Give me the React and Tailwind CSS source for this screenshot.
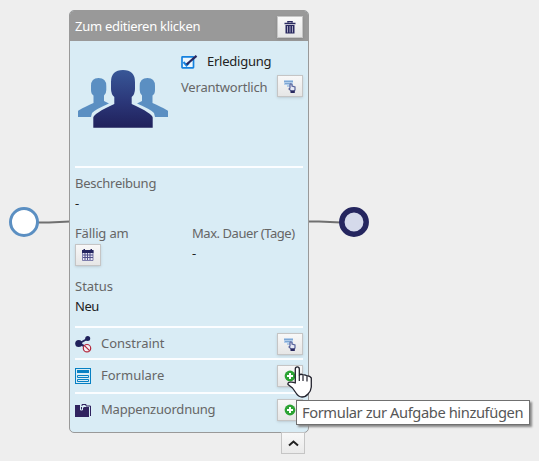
import React from "react";

function IconButton({ children, className = "" }) {
  return (
    <button className={`flex h-[22px] w-[26px] shrink-0 items-center justify-center border border-[#c5c5c5] bg-gradient-to-b from-[#f8f8f8] to-[#e6e6e6] shadow-sm ${className}`}>
      {children}
    </button>
  );
}

function Team() {
  return (
    <svg className="mt-[29px] ml-[3px] block" width="90" height="58" viewBox="0 0 90 58">
      <defs>
        <linearGradient id="team" x1="0" y1="0" x2="0" y2="1">
          <stop offset="0" stopColor="#385797" />
          <stop offset="0.55" stopColor="#2b3779" />
          <stop offset="1" stopColor="#20215b" />
        </linearGradient>
      </defs>
      <g fill="#5b8fc2">
        <path d="M0 47V41Q1 39.500 15.500 33V25.500Q13 24 13 20V16Q13 8 20.500 8Q28.300 8 28.300 16V20Q28.300 24 26 25.500V31L31 33.500Q17 39.500 14 43L13 47Z" />
        <path d="M90 47V41Q89 39.500 74.500 33V25.500Q77 24 77 20V16Q77 8 69.500 8Q61.700 8 61.700 16V20Q61.700 24 64 25.500V31L59 33.500Q73 39.500 76 43L77 47Z" />
      </g>
      <path fill="url(#team)" d="M15.300 57.700V47.500Q15.500 43.500 36.300 34V27Q33 24 33 19V12Q33 0 45 0Q57 0 57 12V19Q57 24 53.700 27V34Q74.500 43.500 74.700 47.500V57.700Z" />
    </svg>
  );
}

function Trash() {
  return (
    <svg width="12" height="13" viewBox="0 0 12 13">
      <path d="M4 1.500V.5H8V1.500M.5 2.500H11.500" fill="none" stroke="#29285f" strokeWidth="1.600" />
      <path d="M1.500 4H10.500V12.500H1.500Z" fill="#29285f" />
      <path d="M3.500 5V11.500M6 5V11.500M8.500 5V11.500" stroke="#aaaac3" strokeWidth="1" />
    </svg>
  );
}

function Assign() {
  return (
    <svg width="12" height="13" viewBox="0 0 12 13">
      <path d="M0 0H9V7H3V5H0Z" fill="#b3cdea" />
      <path d="M0 1.500H9M1 3.500H7" stroke="#7da7d4" strokeWidth="1.200" />
      <path d="M6 8V4.500Q7 3.200 8 4.500V6L11 7V10L10 11H7L5 9Z" fill="#e6e9f5" stroke="#59639a" strokeWidth="1.200" />
      <path d="M6.500 10.500H10.800V13H6.500Z" fill="#29285f" />
    </svg>
  );
}

function Calendar() {
  return (
    <svg width="12" height="12" viewBox="0 0 12 12">
      <path d="M.5 1.500H11V11.500H.5Z" fill="#e7e7f3" stroke="#62629a" strokeWidth=".8" />
      <path d="M0 1H1.500V0H3V1H8.500V0H10V1H11.500V4H0Z" fill="#25265f" />
      <path d="M3 4V11M5.500 4V11M8 4V11M1 6H11M1 8.500H11" stroke="#51518b" />
    </svg>
  );
}

function Check() {
  return (
    <svg width="17" height="14" viewBox="0 0 17 14">
      <rect x="1" y="1.800" width="11.500" height="11" rx=".5" fill="#eef7fd" stroke="#1682df" strokeWidth="1.700" />
      <path d="M2.500 7L5.500 10.500L8 8" fill="none" stroke="#1682df" strokeWidth="2" />
      <path d="M5.500 9.500L15.500 .8" stroke="#29285f" strokeWidth="2.200" />
    </svg>
  );
}

function Constraint() {
  return (
    <svg className="mt-[3px]" width="17" height="17" viewBox="0 0 17 17">
      <path d="M4 7.500L13 2.500M4 7.500L11 11" stroke="#25265f" strokeWidth="2" />
      <circle cx="3.700" cy="7.500" r="3.500" fill="#20215b" />
      <circle cx="12.700" cy="2.600" r="2.500" fill="#20215b" />
      <circle cx="12" cy="12.200" r="3.700" fill="#f4f0f4" stroke="#b3263b" strokeWidth="1.200" />
      <path d="M9.500 9.700L14.500 14.700" stroke="#b3263b" strokeWidth="1.200" />
    </svg>
  );
}

function FormIcon() {
  return (
    <svg className="mt-[2px]" width="16" height="16" viewBox="0 0 16 16">
      <rect x=".5" y=".5" width="15" height="15" fill="#d9ecf5" stroke="#0780c3" />
      <path d="M2 2H14V5H2Z" fill="#0780c3" />
      <path d="M2.500 7.500H13.500V9.500H2.500ZM2.500 11.500H13.500V13.500H2.500Z" fill="none" stroke="#0780c3" />
    </svg>
  );
}

function Folder() {
  return (
    <svg className="mt-[3px]" width="16" height="13" viewBox="0 0 16 13">
      <path d="M0 3V1H5V3H14V13H0Z" fill="#30235f" />
      <path d="M7 2V.5H11V2H15.500V12" fill="none" stroke="#30235f" />
      <path d="M5.500 3V6H7.500V3H9" fill="none" stroke="#d9ecf5" />
    </svg>
  );
}

function Add() {
  return (
    <svg width="12" height="12" viewBox="0 0 12 12">
      <circle cx="6" cy="6" r="5.400" fill="#2ba333" />
      <path d="M3 6H9M6 3V9" stroke="white" strokeWidth="2" />
    </svg>
  );
}

function FieldRow({ icon, label, className, labelClass = "", children }) {
  return (
    <div className={`flex border-t-2 border-[#fbfdff] ${className}`}>
      <div className="flex h-[30px] w-[26px] items-center">{icon}</div>
      <div className={`h-[30px] flex-1 leading-[30px] ${labelClass}`}>{label}</div>
      <div className="pt-[5px]">{children}</div>
    </div>
  );
}

function TaskCard() {
  return (
    <section className="absolute top-[10px] left-[69px] h-[423px] w-[240px] overflow-hidden rounded-[5px] border border-[#999] bg-[#d9ecf5] text-[13px] text-[#666]">
      <header className="flex h-[30px] items-center justify-between bg-[#999] pr-[5px] pl-[5px] text-white">
        <span className="mt-[2px] tracking-[-0.28px]">Zum editieren klicken</span>
        <IconButton className="mt-[2px]"><Trash /></IconButton>
      </header>
      <div className="pr-[5px] pl-[5px]">
        <div className="flex h-[125px]">
          <div className="w-[106px]"><Team /></div>
          <div className="flex-1 pt-[11px]">
            <div className="flex h-[20px] items-center">
              <Check />
              <span className="ml-[9px] tracking-[-0.25px] text-[#222]">Erledigung</span>
            </div>
            <div className="mt-[3px] flex h-[22px] items-center justify-between">
              <span className="mt-[3px] tracking-[-0.2px]">Verantwortlich</span>
              <IconButton><Assign /></IconButton>
            </div>
          </div>
        </div>
        <div className="h-[160px] border-t-2 border-[#fbfdff] pt-[5px] leading-5">
          <div className="tracking-[-0.25px]">Beschreibung</div>
          <div className="text-[#222]">-</div>
          <div className="mt-[10px] flex">
            <div className="w-[117px]">
              <div className="tracking-[-0.15px]">Fällig am</div>
              <IconButton className="mt-px"><Calendar /></IconButton>
            </div>
            <div>
              <div className="tracking-[-0.45px] whitespace-nowrap">Max. Dauer (Tage)</div>
              <div className="text-[#222]">-</div>
            </div>
          </div>
          <div className="mt-[10px]">Status</div>
          <div className="tracking-[-0.5px] text-[#222]">Neu</div>
        </div>
        <FieldRow className="h-[32px]" icon={<Constraint />} label="Constraint"><IconButton><Assign /></IconButton></FieldRow>
        <FieldRow className="h-[34px]" icon={<FormIcon />} label="Formulare"><IconButton><Add /></IconButton></FieldRow>
        <FieldRow className="h-[39px]" labelClass="tracking-[-0.22px]" icon={<Folder />} label="Mappenzuordnung"><IconButton><Add /></IconButton></FieldRow>
      </div>
    </section>
  );
}

export default function App() {
  return (
    <main className="relative h-[461px] w-[539px] overflow-hidden bg-[#eee] font-['Noto_Sans',sans-serif]">
      <svg className="absolute top-[205px] left-0" width="380" height="34">
        <path d="M38 17.500H49L70 16.500M308 16.500H319L341 17.500" fill="none" stroke="#707070" strokeWidth="2" />
        <circle cx="24" cy="17" r="13.500" fill="white" stroke="#5b8fc2" strokeWidth="3" />
        <circle cx="354" cy="17" r="12.200" fill="#d5daeb" stroke="#25265f" strokeWidth="5.500" />
      </svg>
      <TaskCard />
      <button className="absolute top-[432px] left-[281px] flex h-[22px] w-[24px] items-center justify-center border border-[#c5c5c5] bg-gradient-to-b from-[#f8f8f8] to-[#eaeaea]">
        <svg width="11" height="7" viewBox="0 0 11 7"><path d="M1 5.500L5.500 1.500L10 5.500" fill="none" stroke="#222" strokeWidth="2" /></svg>
      </button>
      <div className="absolute top-[400px] left-[296px] h-[25px] w-[234px] border border-[#707070] bg-white pl-[5px] text-[14.7px] leading-[23px] tracking-[-0.4px] whitespace-nowrap text-[#575757] shadow-[2px_2px_2px_#888]">
        Formular zur Aufgabe hinzufügen
      </div>
      <svg className="absolute top-[366px] left-[287px]" width="26" height="32" viewBox="0 0 26 32">
        <path d="M8.300 17V3Q8.300 .8 10.300 .8Q12.300 .8 12.300 3V9Q14 7.500 16 9Q18 8.300 20 10Q22.500 9.500 24.300 12V21Q24 25 21 28Q18.500 31 15 31Q11.500 31 9 27L5.500 22L1 18.500Q.5 16.500 3 16.200Q5.500 15.800 8.300 17Z" fill="white" stroke="#22222d" strokeWidth="1.300" strokeLinejoin="round" />
        <path d="M12.300 9V15M16 9.500V15M20 10.500V15.500" stroke="#22222d" strokeWidth="1.200" />
      </svg>
    </main>
  );
}
